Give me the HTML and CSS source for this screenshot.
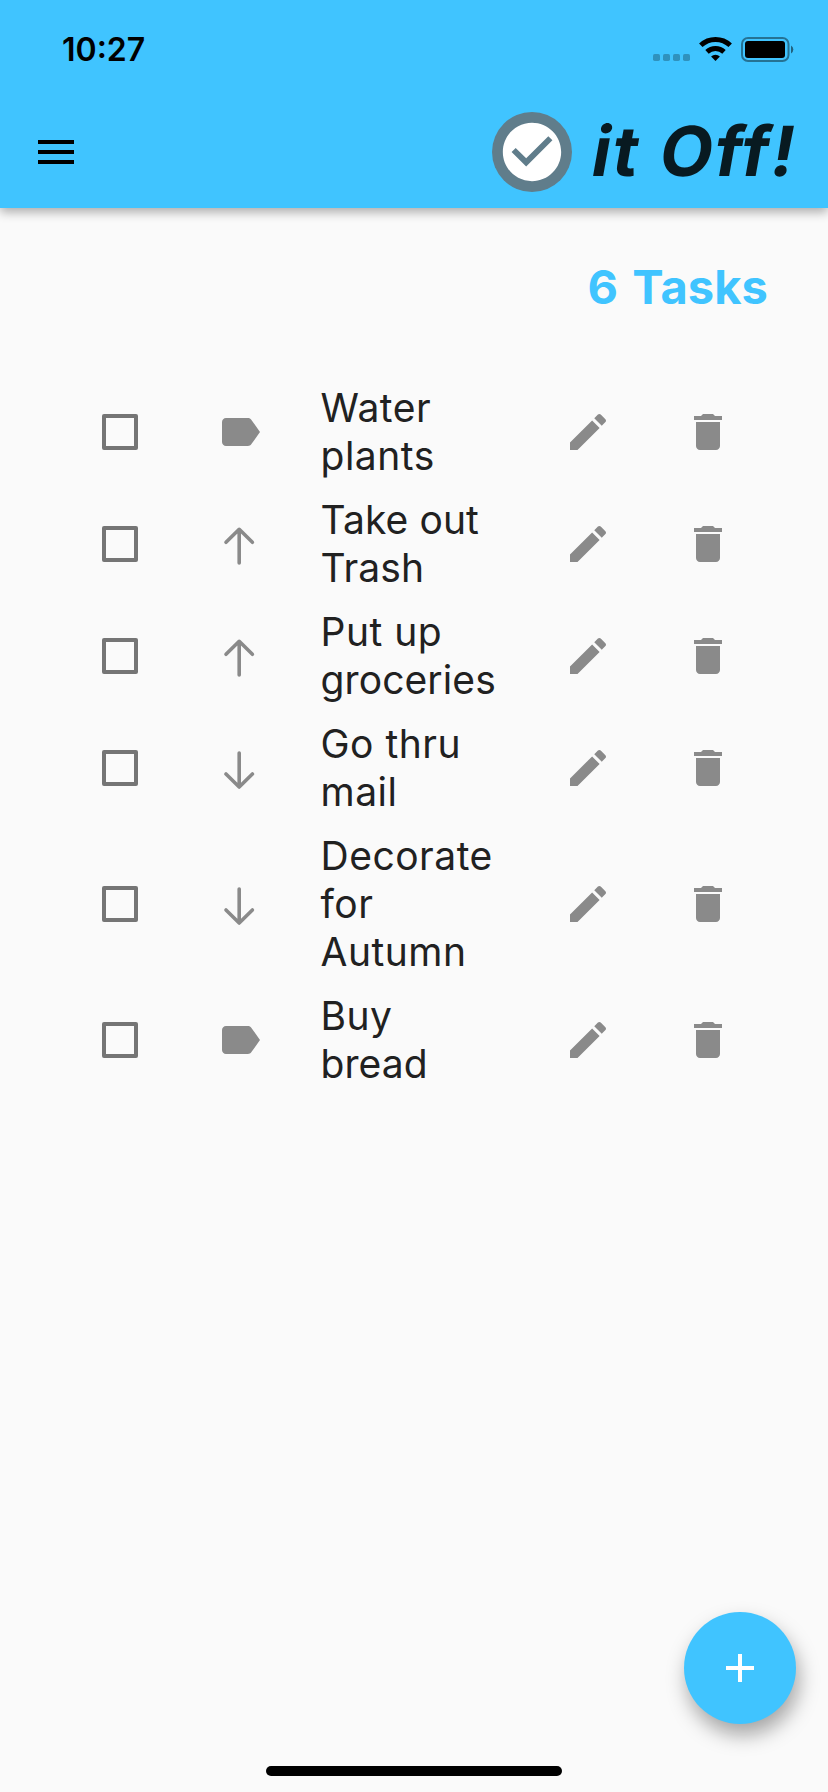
FILE: index.html
```html
<!DOCTYPE html>
<html lang="en">
<head>
<meta charset="utf-8">
<title>Check it Off!</title>
<link rel="stylesheet" href="styles.css">
</head>
<body>
<svg class="defs" width="0" height="0" aria-hidden="true">
  <symbol id="label" viewBox="0 0 24 24"><path d="M17.63 5.84C17.27 5.33 16.67 5 16 5L5 5.01C3.9 5.01 3 5.9 3 7v10c0 1.1.9 1.99 2 1.99L16 19c.67 0 1.27-.33 1.63-.84L22 12l-4.37-6.16z"/></symbol>
  <symbol id="up" viewBox="0 0 48 48"><path class="line" d="M23.2 9.3V43M10 22.3 23.2 9.3 36.4 22.3"/></symbol>
  <symbol id="down" viewBox="0 0 48 48"><path class="line" d="M23.2 9V43M10 30 23.2 43 36.4 30"/></symbol>
  <symbol id="edit" viewBox="0 0 24 24"><path d="M3 17.25V21h3.75L17.81 9.94l-3.75-3.75L3 17.25zM20.71 7.04c.39-.39.39-1.02 0-1.41l-2.34-2.34c-.39-.39-1.02-.39-1.41 0l-1.83 1.83 3.75 3.75 1.83-1.83z"/></symbol>
  <symbol id="trash" viewBox="0 0 24 24"><path d="M6 19c0 1.1.9 2 2 2h8c1.1 0 2-.9 2-2V7H6v12zM19 4h-3.5l-1-1h-5l-1 1H5v2h14V4z"/></symbol>
</svg>
<div class="screen">
  <header class="header">
    <div class="status">
      <span class="time">10:27</span>
      <svg class="status-icons" width="144" height="30" viewBox="0 0 144 30">
        <g opacity=".25"><rect x="1" y="19" width="7" height="7" rx="1.7"/><rect x="11" y="19" width="7" height="7" rx="1.7"/><rect x="21" y="19" width="7" height="7" rx="1.7"/><rect x="31" y="19" width="7" height="7" rx="1.7"/></g>
        <g fill="none" stroke="#000" stroke-width="5"><path d="M48.8 10.3a21.5 21.5 0 0 1 29.4 0"/><path d="M55 16.9a12.5 12.5 0 0 1 17 0"/></g>
        <path d="M59.1 21.6a6.2 6.2 0 0 1 8.8 0L63.5 26z"/>
        <rect x="90" y="3" width="46.5" height="23" rx="6" fill="none" stroke="#000" stroke-opacity=".42" stroke-width="2"/>
        <rect x="93" y="6" width="40" height="17" rx="3"/>
        <path d="M139 10.5a4.6 4.6 0 0 1 0 8z" opacity=".5"/>
      </svg>
    </div>
    <div class="bar">
      <svg class="menu" width="48" height="48" viewBox="0 0 24 24"><path d="M3 18h18v-2H3v2zm0-5h18v-2H3v2zm0-7v2h18V6H3z"/></svg>
      <div class="brand">
        <span class="avatar"><svg width="70" height="70" viewBox="0 0 24 24"><path d="M12 2C6.48 2 2 6.48 2 12s4.48 10 10 10 10-4.48 10-10S17.52 2 12 2zm-2 15l-5-5 1.41-1.41L10 14.17l7.59-7.59L19 8l-9 9z"/></svg></span>
        <h1 class="title">it Off!</h1>
      </div>
    </div>
  </header>
  <main class="main">
    <h2 class="count">6 Tasks</h2>
    <ul class="tasks">
      <li class="task"><span class="cell"><i class="box"></i></span><span class="cell"><svg class="icon"><use href="#label"/></svg></span><p class="name">Water<br>plants</p><span class="cell"><svg class="icon"><use href="#edit"/></svg></span><span class="cell"><svg class="icon"><use href="#trash"/></svg></span></li>
      <li class="task"><span class="cell"><i class="box"></i></span><span class="cell"><svg class="icon"><use href="#up"/></svg></span><p class="name tight">Take out<br>Trash</p><span class="cell"><svg class="icon"><use href="#edit"/></svg></span><span class="cell"><svg class="icon"><use href="#trash"/></svg></span></li>
      <li class="task"><span class="cell"><i class="box"></i></span><span class="cell"><svg class="icon"><use href="#up"/></svg></span><p class="name">Put up<br><span class="tight">groceries</span></p><span class="cell"><svg class="icon"><use href="#edit"/></svg></span><span class="cell"><svg class="icon"><use href="#trash"/></svg></span></li>
      <li class="task"><span class="cell"><i class="box"></i></span><span class="cell"><svg class="icon"><use href="#down"/></svg></span><p class="name">Go thru<br>mail</p><span class="cell"><svg class="icon"><use href="#edit"/></svg></span><span class="cell"><svg class="icon"><use href="#trash"/></svg></span></li>
      <li class="task"><span class="cell"><i class="box"></i></span><span class="cell"><svg class="icon"><use href="#down"/></svg></span><p class="name">Decorate<br>for<br>Autumn</p><span class="cell"><svg class="icon"><use href="#edit"/></svg></span><span class="cell"><svg class="icon"><use href="#trash"/></svg></span></li>
      <li class="task"><span class="cell"><i class="box"></i></span><span class="cell"><svg class="icon"><use href="#label"/></svg></span><p class="name">Buy<br><span class="tight">bread</span></p><span class="cell"><svg class="icon"><use href="#edit"/></svg></span><span class="cell"><svg class="icon"><use href="#trash"/></svg></span></li>
    </ul>
  </main>
  <footer class="footer">
    <button class="fab" aria-label="Add task"><svg width="48" height="48" viewBox="0 0 24 24"><path d="M19 13h-6v6h-2v-6H5v-2h6V5h2v6h6v2z"/></svg></button>
    <div class="home"></div>
  </footer>
</div>
</body>
</html>
```
FILE: styles.css
```css
* { box-sizing: border-box; margin: 0; padding: 0; }
body { font-family: Inter, "Liberation Sans", sans-serif; background: #fafafa; }
.defs { display: block; width: 0; height: 0; }
.screen { width: 828px; height: 1792px; display: flex; flex-direction: column; overflow: hidden; background: #fafafa; }
.header { height: 208px; flex: none; background: #40c4ff; box-shadow: 0 4px 10px rgba(0,0,0,.32); }
.status { height: 96px; display: flex; justify-content: space-between; align-items: flex-start; padding: 35px 32px 0 62px; }
.time { font-size: 32px; line-height: 29px; font-weight: 600; letter-spacing: 0; }
.status-icons { display: block; }
.bar { height: 112px; display: flex; justify-content: space-between; align-items: center; padding: 0 32px; }
.menu { display: block; }
.brand { display: flex; align-items: center; width: 304px; gap: 21px; }
.avatar { width: 80px; height: 80px; flex: none; border-radius: 50%; background: #607d8b; display: flex; align-items: center; justify-content: center; }
.avatar svg { fill: #fff; }
.title { font-size: 69px; line-height: 78px; padding-bottom: 2px; font-weight: 700; transform: skewX(-10deg); letter-spacing: 2.1px; word-spacing: 1px; white-space: nowrap; color: rgba(0,0,0,.87); }
.main { flex: 1; padding: 48px 60px 0; }
.count { height: 62px; line-height: 62px; font-size: 47px; font-weight: 700; letter-spacing: .1px; word-spacing: 3px; text-align: right; color: #40c4ff; }
.tasks { list-style: none; margin-top: 58px; }
.task { display: grid; grid-template-columns: 120px 120px 1fr 120px 120px; align-items: center; padding: 8px 0; }
.cell { display: flex; align-items: center; justify-content: center; }
.box { width: 36px; height: 36px; border: 4px solid #757575; border-radius: 2px; }
.icon { display: block; width: 48px; height: 48px; fill: #8a8a8a; }
.line { fill: none; stroke: #8a8a8a; stroke-width: 3.6; stroke-linecap: round; stroke-linejoin: round; }
.name { padding-left: 20.5px; font-size: 39px; line-height: 48px; letter-spacing: .5px; white-space: nowrap; color: #212121; }
.tight, .name.tight { letter-spacing: .1px; }
.footer { display: flex; flex-direction: column; align-items: center; padding-bottom: 16px; }
.fab { align-self: flex-end; width: 112px; height: 112px; margin: 0 32px 42px; border: 0; border-radius: 50%; background: #40c4ff; display: flex; align-items: center; justify-content: center; box-shadow: 3px 11px 20px rgba(0,0,0,.34); }
.fab svg { fill: #fff; }
.home { width: 296px; height: 10px; border-radius: 5px; background: #000; }
```
